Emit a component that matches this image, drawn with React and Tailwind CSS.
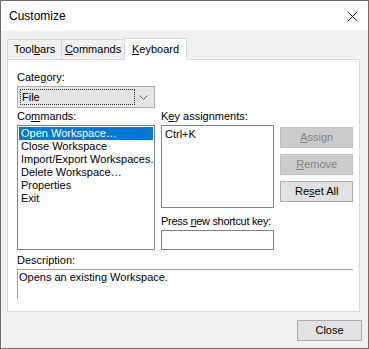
import React from 'react';

const font = { fontFamily: '"Liberation Sans", Arial, sans-serif' };

const Btn = ({ children, disabled, className = '' }) => (
  <button
    className={`h-[21px] border text-[11px] leading-none flex items-center justify-center ${
      disabled ? 'bg-[#cccccc] border-[#bfbfbf] text-[#838383]' : 'bg-[#e1e1e1] border-[#adadad] text-black'
    } ${className}`}
  >
    {children}
  </button>
);

const commands = [
  'Open Workspace…',
  'Close Workspace',
  'Import/Export Workspaces...',
  'Delete Workspace…',
  'Properties',
  'Exit',
];

export default function App() {
  return (
    <div className="w-[369px] h-[349px] border border-[#6b6b6b] bg-[#f0f0f0] flex flex-col text-black" style={font}>
      {/* title bar */}
      <div className="h-[30px] bg-white flex items-center justify-between pl-2 pr-[10px]">
        <span className="text-[12px]">Customize</span>
        <svg width="11" height="11" viewBox="0 0 11 11">
          <path d="M0.5 0.5L10.5 10.5M10.5 0.5L0.5 10.5" stroke="#1a1a1a" strokeWidth="1" />
        </svg>
      </div>

      <div className="flex-1 flex flex-col pl-[6px] pr-[8px]">
        {/* tabs */}
        <div className="mt-[7px] flex items-end h-[21px] text-[11px]">
          <div className="w-[55px] h-[20px] border border-b-0 border-[#d9d9d9] flex items-center justify-center">
            Tool<u>b</u>ars
          </div>
          <div className="w-[63px] h-[20px] border border-b-0 border-l-0 border-[#d9d9d9] flex items-center justify-center">
            <u>C</u>ommands
          </div>
          <div className="relative z-10 -ml-px -mb-px w-[63px] h-[22px] bg-white border border-b-0 border-[#d9d9d9] flex items-center justify-center">
            <u>K</u>eyboard
          </div>
        </div>

        {/* panel */}
        <div className="h-[253px] bg-white border border-[#d9d9d9] pl-[9px] pr-[6px] pt-[10px] text-[11px]">
          <div className="h-[15px] leading-[15px]">Cate<u>g</u>ory:</div>
          <div className="mt-px w-[138px] h-[22px] bg-[#e5e5e5] border border-[#adadad] flex items-center pl-[2px] pr-[6px]">
            <div className="w-[115px] h-[16px] border border-dotted border-[#333333] flex items-center pl-px leading-none">File</div>
            <div className="flex-1 flex justify-end">
              <svg width="9" height="5" viewBox="0 0 9 5">
                <path d="M0.5 0.5L4.5 4.5L8.5 0.5" fill="none" stroke="#606060" strokeWidth="1" />
              </svg>
            </div>
          </div>

          <div className="mt-px flex">
            <div className="w-[138px] flex flex-col">
              <div className="h-[15px] leading-[15px]">Co<u>m</u>mands:</div>
              <div className="mt-px h-[125px] border border-[#828282] p-px overflow-hidden">
                {commands.map((c, i) => (
                  <div
                    key={c}
                    className={`h-[13px] leading-[13px] pl-[2px] whitespace-nowrap ${
                      i === 0 ? 'bg-[#0078d7] text-white' : ''
                    }`}
                  >
                    {c}
                  </div>
                ))}
              </div>
            </div>

            <div className="ml-[6px] w-[114px] flex flex-col">
              <div className="h-[15px] leading-[15px]">K<u>e</u>y assignments:</div>
              <div className="mt-px h-[83px] border border-[#828282] pl-[3px] pt-[2px] leading-[13px]">Ctrl+K</div>
              <div className="mt-[6px] h-[15px] leading-[15px] whitespace-nowrap tracking-[-0.3px]">Press <u>n</u>ew shortcut key:</div>
              <div className="mt-px h-[20px] border border-[#828282] bg-white" />
            </div>

            <div className="ml-[6px] w-[73px] pt-[18px] flex flex-col gap-[6px]">
              <Btn disabled><u>A</u>ssign</Btn>
              <Btn disabled><u>R</u>emove</Btn>
              <Btn>Re<u>s</u>et All</Btn>
            </div>
          </div>

          <div className="mt-[3px] h-[15px] leading-[15px]">Description:</div>
          <div className="mt-px w-[336px] h-[30px] border-t border-l border-[#a0a0a0] pl-px pt-px leading-[13px]">
            Opens an existing Workspace.
          </div>
        </div>

        {/* footer */}
        <div className="mt-[8px] flex justify-end -mr-[2px]">
          <Btn className="w-[65px]">Close</Btn>
        </div>
      </div>
    </div>
  );
}
